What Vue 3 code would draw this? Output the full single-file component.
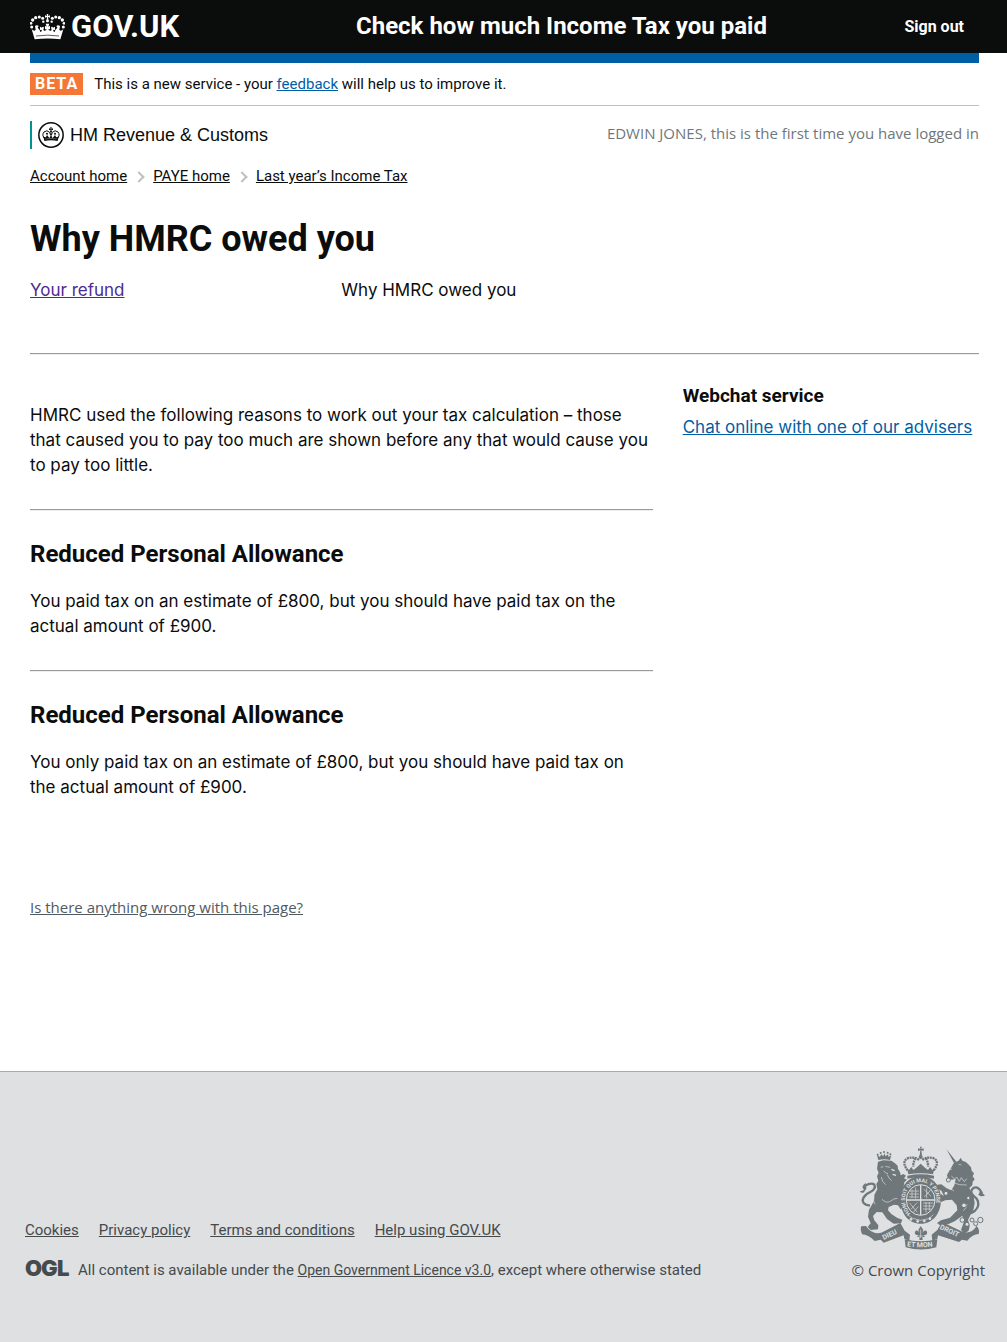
<script setup>
const breadcrumbs = ['Account home', 'PAYE home', 'Last year’s Income Tax']
const reasons = [
  { title: 'Reduced Personal Allowance', text: 'You paid tax on an estimate of £800, but you should have paid tax on the actual amount of £900.' },
  { title: 'Reduced Personal Allowance', text: 'You only paid tax on an estimate of £800, but you should have paid tax on the actual amount of £900.' },
]
const footerLinks = ['Cookies', 'Privacy policy', 'Terms and conditions', 'Help using GOV.UK']
</script>

<template>
  <div class="page">
    <header class="header">
      <a class="logo" href="#">
        <svg class="crown" viewBox="30 38 105 78" aria-hidden="true">
          <g fill="#fff">
            <path d="M80 38h5l-1 6 6-2v7l-6-2 1 8h-5l1-8-6 2v-7l6 2z" />
            <circle cx="82.500" cy="58" r="4.500" />
            <circle cx="68" cy="51" r="4.500" /><circle cx="58" cy="47" r="4.500" /><circle cx="47" cy="49" r="5" /><circle cx="38" cy="56" r="5" /><circle cx="33" cy="66" r="4" /><circle cx="35" cy="77" r="4.500" /><circle cx="70" cy="61" r="3.500" />
            <circle cx="97" cy="51" r="4.500" /><circle cx="107" cy="47" r="4.500" /><circle cx="118" cy="49" r="5" /><circle cx="127" cy="56" r="5" /><circle cx="132" cy="66" r="4" /><circle cx="130" cy="77" r="4.500" /><circle cx="95" cy="61" r="3.500" />
            <path d="M44 114 35 84q8 8 12 1l-2-11q6-5 11 0l-3 5q7 6 8 13 6-1 4-7l-5 1v-10l6 3q3-5 6 0-4 7 0 9 7 1 8-5l-5 1v-11l5 3-3-9h11l-3 9 5-3v11l-5-1q1 6 8 5 4-2 0-9 3-5 6 0l6-3v10l-5-1q-2 6 4 7 1-7 8-13l-3-5q5-5 11 0l-2 11q4 7 12-1l-9 30q-38-5-77 0z" />
          </g>
          <path d="M48 104q35-5 69 0" fill="none" stroke="#0b0c0c" stroke-width="2" />
        </svg>
        <span>GOV.UK</span>
      </a>
      <a class="service" href="#">Check how much Income Tax you paid</a>
      <a class="signout" href="#">Sign out</a>
    </header>

    <div class="container">
      <div class="bar"></div>
      <div class="phase">
        <strong class="tag">BETA</strong>
        <span>This is a new service - your <a class="link" href="#">feedback</a> will help us to improve it.</span>
      </div>
      <div class="org-row">
        <div class="org">
          <svg class="crest" viewBox="0 0 78 78" aria-hidden="true">
            <circle cx="39" cy="39" r="36.500" fill="#fff" stroke="#0b0c0c" stroke-width="4.500" />
            <g fill="none" stroke="#0b0c0c" stroke-width="3">
              <path d="M21 52Q10 39 18 30q9-8 17 1 1 5 3 8m19 13q11-13 3-22-9-8-17 1-1 5-3 8M39 27v23" />
            </g>
            <g fill="#0b0c0c">
              <path d="M37 15h4l-1 5 5-1v5l-5-1 2 7h-6l2-7-5 1v-5l5 1zM19 57l-3-16q4 6 8 4l3-6 4 5 3 4 5-7 5 7 3-4 4-5 3 6q4 2 8-4l-3 16q-20-4-40 0z" />
              <circle cx="27" cy="35" r="3" /><circle cx="51" cy="35" r="3" />
            </g>
            <path d="M22 51q17-4 34 0" fill="none" stroke="#fff" stroke-width="1" />
          </svg>
          <span>HM Revenue &amp; Customs</span>
        </div>
        <p class="login">EDWIN JONES, this is the first time you have logged in</p>
      </div>
      <nav aria-label="Breadcrumb">
        <ol class="crumbs">
          <li v-for="c in breadcrumbs" :key="c"><a href="#">{{ c }}</a></li>
        </ol>
      </nav>

      <main>
        <h1>Why HMRC owed you</h1>
        <div class="columns">
          <div class="two-thirds tabs">
            <a class="visited" href="#">Your refund</a>
            <span>Why HMRC owed you</span>
          </div>
        </div>
        <hr class="main-rule">
        <div class="columns">
          <div class="two-thirds">
            <p class="intro">HMRC used the following reasons to work out your tax calculation – those that caused you to pay too much are shown before any that would cause you to pay too little.</p>
            <section v-for="(r, i) in reasons" :key="i">
              <hr>
              <h2>{{ r.title }}</h2>
              <p>{{ r.text }}</p>
            </section>
          </div>
          <aside class="third">
            <h3>Webchat service</h3>
            <a class="link" href="#">Chat online with one of our advisers</a>
          </aside>
        </div>
        <a class="report" href="#">Is there anything wrong with this page?</a>
      </main>
    </div>

    <footer class="footer">
      <div class="meta">
        <ul class="footer-links">
          <li v-for="l in footerLinks" :key="l"><a href="#">{{ l }}</a></li>
        </ul>
        <div class="licence">
          <svg class="ogl" viewBox="0 0 46 25" role="img" aria-label="OGL">
            <text y="18" class="ogl-text"><tspan x="0">O</tspan><tspan x="16">G</tspan><tspan x="32">L</tspan></text>
          </svg>
          <p>All content is available under the <a class="small" href="#">Open Government Licence v3.0</a>, except where otherwise stated</p>
        </div>
      </div>
      <a class="copyright" href="#">
        <svg class="arms" viewBox="30 18 375 312" aria-hidden="true">
          <defs>
            <path id="garter" d="M182 220A47 53 0 1 1 242 220" />
            <path id="ribbon-left" d="M101 300L160 272" />
            <path id="ribbon-right" d="M268 266L345 302" />
            <path id="ribbon-mid" d="M171 319q41 6 90-1" />
          </defs>
          <g fill="#6f777b">
            <!-- lion -->
            <path d="M85 60l-4-15 9 6 3-8 7 6 3-9 4 9 7-6 2 8 8-5-4 14q-17-4-35 0z" />
            <circle cx="83" cy="44" r="3" /><circle cx="92" cy="39" r="3" /><circle cx="102" cy="36" r="3" /><circle cx="113" cy="38" r="3" /><circle cx="121" cy="43" r="3" />
            <path d="M84 65l16-4 24 1 10 7 9 8 1 10 6 9 2 10 8-4 8 5-6 8 9 4-8 8-2 12 7 20v22l-6 17-10 10-8-12-12-2-16 7-2 10 10 11 17 11 16 6-4 11-22 1-20-14-14-20-17-1-11 12 4 13 12 15-1 12-22 2-9-9 9-11-8-20 3-21 14-24 2-20 9-17-3-16 6-10-4-13 5-11-5-12z" />
          </g>
          <g fill="none" stroke="#6f777b" stroke-width="7">
            <path d="M60 197Q32 192 40 174q6-12 21-18 18-10 12-22-8-8-28 3" />
            <path d="M363 220Q390 206 384 184q-2-8-14-17-12-12-1-22 16-10 27 15" />
          </g>
          <g fill="#6f777b">
            <path d="M48 128q-4 9 2 16l-8 13q-6 4-14-2l14-5-5-9q2-8 11-13z" />
            <path d="M392 150q2 9 13 16-10 7-20-2z" />
            <!-- unicorn -->
            <path d="M289 27l30 38-7 4z" />
            <path d="M312 68l14-6 6-9 5 9q12 2 17 10l9 10 2 10 7 8-4 9 6 9-6 7-1 11-9 8 5 12 8 13 3 20-4 21-9 16-7 14 5 18-3 14-14 9-9-12 9-24-5-18-23 17-20 9-24 3-9-7 12-8 27-8 22-22-2-15-14-17-20 2-13 5-10-6 2-13 9-4 8 5-8-16-14-7 2-11 12-1 16 12 14 6 9-15 4-19-12 2-12-5-2-9z" />
            <!-- central crown -->
            <path d="M210 20h5l-1 7 7-2v8l-7-2 2 16h-7l2-16-7 2v-8l7 2zM175 103l-4-17 6 4 7-9 6 9 9-7 13-12 13 12 9 7 6-9 7 9 6-4-4 17q-37-6-74 0z" />
            <path d="M172 107q40-8 80 0v9q-40-8-80 0z" />
            <circle cx="212" cy="51" r="6" />
            <path d="M212 108c36 0 61 30 61 71s-25 72-61 72-61-31-61-72 25-71 61-71z" />
          </g>
          <g fill="none" stroke="#6f777b" stroke-width="7" stroke-dasharray="6 2">
            <path d="M173 91q-18-23-3-35 22-8 37 4m44 31q18-23 3-35-22-8-37 4M197 55q-8 10-7 25m37-25q8 10 7 25" />
          </g>
          <g fill="none" stroke="#dee0e2" stroke-width="2">
            <ellipse cx="212" cy="180" rx="43" ry="46" stroke-width="3" />
            <path d="M212 135v90M169 180h86" stroke-width="4" />
            <path d="M180 153h27M178 162h29M177 171h30M219 189h31M219 198h29M219 207h24M186 149v25M197 142v34M228 186v32M238 186v26M178 188l24 29M183 208l19-21M190 217l15-17M221 147l22 22M223 171l20-22M230 143v32" />
            <path d="M92 82l8-2M106 79l14 3M101 92q4 8 13 9M72 168q-4 17 3 25M96 178q14 14 26 5 9-8 20-8M112 104q3 11 13 18M94 111q2 16 13 23M296 87l10 1M326 73l8 2M304 108l10 9 6-6 8 13 6-11 9 12 7-9M308 127q20 10 42 8M340 212q10-8 11-20M300 145l12 8M174 225l14 10 24 6 24-5 14-12" />
            <path d="M124 88l10 4M128 103l10 3" stroke-width="4" />
          </g>
          <g fill="#dee0e2"><circle cx="183" cy="238" r="4" /><circle cx="203" cy="244" r="4" /><circle cx="223" cy="243" r="4" /><circle cx="240" cy="236" r="4" /></g>
          <g fill="none" stroke="#6f777b" stroke-width="3">
            <circle cx="295" cy="120" r="6" fill="#dee0e2" /><circle cx="288" cy="160" r="6" fill="#dee0e2" /><circle cx="342" cy="196" r="7" fill="#dee0e2" /><circle cx="355" cy="174" r="5" fill="#dee0e2" /><circle cx="337" cy="240" r="7" fill="#dee0e2" /><circle cx="351" cy="253" r="6" fill="#dee0e2" /><circle cx="366" cy="240" r="6" /><circle cx="377" cy="251" r="6" /><circle cx="391" cy="240" r="8" />
          </g>
          <g fill="#6f777b">
            <path d="M48 258q18 27 46 20l57-29 13 23 16 12-2 18-15-6-2-10-60 22-9-9-18 4q-20-20-38-20-6-14-3-24z" />
            <path d="M380 258q-16 25-41 18l-63-30-14 24-17 14 2 18 15-6 2-10 63 20 9-7 16 3q16-20 34-20 4-14-6-24z" />
            <path d="M164 298q48 12 98 0l-3 24q-46 13-92 0z" />
          </g>
          <path d="M195 257h36v35l-18 6-18-6z" fill="#dee0e2" />
          <path d="M212 258l8 12-3 8q9-12 14-3 3 10-10 10l4 5-8 2 1 8h-10l1-8-8-2 4-5q-13 0-10-10 6-8 14 3l-4-8z" fill="#6f777b" />
          <path d="M212 268v26M205 288h15" fill="none" stroke="#dee0e2" stroke-width="2" />
          <g class="motto">
            <text><textPath href="#garter">HONI SOIT QUI MAL Y PENSE</textPath></text>
            <text class="scroll"><textPath href="#ribbon-left">DIEU</textPath></text>
            <text class="scroll"><textPath href="#ribbon-mid">ET MON</textPath></text>
            <text class="scroll"><textPath href="#ribbon-right">DROIT</textPath></text>
          </g>
        </svg>
        <span>© Crown Copyright</span>
      </a>
    </footer>
  </div>
</template>

<style>
body { margin: 0; background: #dee0e2; }
</style>

<style scoped>
.page { background: #fff; color: #0b0c0c; font: 17px/25px Inter, "Noto Sans", sans-serif; }
h1, h2, h3, p, ul, ol { margin: 0; padding: 0; }
h1, h2, h3, .header, .phase, .crumbs, .footer { font-family: Roboto, "Noto Sans", sans-serif; }
ul, ol { list-style: none; }
a { color: inherit; }
.link { color: #005ea5; }
.header { display: flex; align-items: center; height: 53px; padding: 0 43px 0 30px; background: #0b0c0c; color: #fff; font-weight: 700; }
.header a { text-decoration: none; }
.logo { display: flex; align-items: center; gap: 6px; width: 326px; font-size: 31px; line-height: 52px; }
.crown { width: 35px; height: 26px; }
.service { font-size: 24px; }
.signout { margin-left: auto; font-size: 16px; }
.container { margin: 0 28px 0 30px; }
.bar { height: 10px; background: #005ea5; }
.phase { display: flex; align-items: center; gap: 11px; height: 42px; border-bottom: 1px solid #bfc1c3; font-size: 15px; }
.tag { padding: 0 5px; background: #f47738; color: #fff; font-size: 16px; line-height: 22px; letter-spacing: 1px; }
.org-row { display: flex; justify-content: space-between; align-items: flex-start; margin-top: 15px; }
.org { display: flex; align-items: center; gap: 6px; padding-left: 6px; border-left: 2px solid #009390; font: 18px/28px "Liberation Sans", Arial, sans-serif; }
.crest { width: 26px; height: 26px; }
.login { color: #6f777b; font-family: "Open Sans", sans-serif; font-size: 15px; }
.crumbs { display: flex; margin-top: 15px; font-size: 15px; }
.crumbs li { display: flex; align-items: center; }
.crumbs li + li::before { content: ""; width: 6px; height: 6px; margin: 0 10px 0 8px; border: solid #bfc1c3; border-width: 2px 2px 0 0; transform: rotate(45deg); }
h1 { margin-top: 30px; font-size: 36px; line-height: 40px; }
.columns { display: flex; margin: 0 -15px; }
.two-thirds { box-sizing: border-box; width: 66.667%; padding: 0 15px; }
.third { box-sizing: border-box; width: 33.333%; padding: 28px 0 0 15px; }
.tabs { display: flex; margin-top: 19px; }
.tabs > * { flex: 1; }
.visited { color: #4c2c92; }
hr { margin: 31px 0 28px; border: 0; border-top: 1px solid #9a9a9a; border-bottom: 1px solid #eee; }
hr.main-rule { margin: 50px 0 0; }
.intro { margin-top: 48px; }
h2 { margin-bottom: 20px; font-size: 24px; line-height: 30px; }
h3 { margin-bottom: 7px; font-size: 19px; line-height: 25px; }
.report { display: block; width: max-content; margin-top: 95px; color: #505a5f; font-family: "Open Sans", sans-serif; font-size: 15px; }
.footer { display: flex; justify-content: space-between; align-items: flex-end; margin-top: 151px; padding: 74px 22px 57px 25px; border-top: 1px solid #a1acb2; background: #dee0e2; color: #454a4d; font-size: 15px; }
.footer-links { display: flex; gap: 20px; margin-bottom: 15px; }
.licence { display: flex; align-items: center; gap: 7px; }
.ogl { width: 46px; height: 25px; overflow: visible; }
.ogl-text { font: 900 22px Inter, sans-serif; fill: #454a4d; }
.small { font-size: 14px; }
.copyright { display: flex; flex-direction: column; align-items: flex-end; gap: 8px; font-family: "Open Sans", sans-serif; text-decoration: none; }
.arms { width: 125px; height: 104px; }
.motto { fill: #dee0e2; font: 700 16px Roboto, sans-serif; }
.motto .scroll { font-size: 21px; }
</style>
